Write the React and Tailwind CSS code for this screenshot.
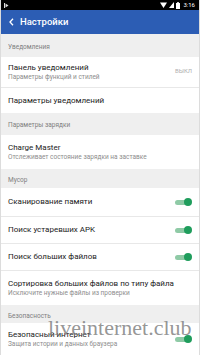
import React from "react";

function Toggle() {
  return (
    <div className="relative w-[17px] h-[8px] flex items-center">
      <div className="w-[15px] h-[5px] rounded-full bg-[#8fcaa6]" />
      <div className="absolute right-0 w-[8px] h-[8px] rounded-full bg-[#1f9d5c]" />
    </div>
  );
}

function Header({ title, h, pt }) {
  return (
    <div className={`bg-[#efefef] flex items-center px-[7px] ${h} ${pt}`}>
      <span className="text-[6.5px] text-[#808080]">{title}</span>
    </div>
  );
}

function Row({ title, sub, h, right, last }) {
  return (
    <div className={`flex items-center pl-[7px] pr-[7px] ${h} ${last ? "" : "border-b border-[#e8e8e8]"}`}>
      <div className="flex-1 flex flex-col justify-center">
        <div className="text-[8px] leading-[10px] text-[#222]">{title}</div>
        {sub && <div className="text-[6.5px] leading-[9px] text-[#8d8d8d]">{sub}</div>}
      </div>
      {right}
    </div>
  );
}

export default function App() {
  return (
    <div
      className="relative w-[200px] h-[355px] overflow-hidden bg-white border-x border-[#dcdcdc]"
      style={{ fontFamily: "Roboto, 'Noto Sans', sans-serif" }}
    >
      {/* status bar */}
      <div className="h-[10px] bg-black flex items-center justify-between pl-[3px] pr-[4px]">
        <svg width="5" height="5" viewBox="0 0 5 5">
          <rect x="0" y="0" width="1" height="5" fill="#ddd" />
          <path d="M1.5 0.5 L4.5 2.5 L1.5 4.5 Z" fill="#ddd" />
        </svg>
        <div className="flex items-center gap-[2px]">
          <svg width="7" height="6" viewBox="0 0 7 6">
            <path d="M0 0.5 L7 0.5 L3.5 6 Z" fill="#fff" />
          </svg>
          <svg width="5" height="6" viewBox="0 0 5 6">
            <path d="M5 0 L5 6 L0 6 Z" fill="#fff" />
          </svg>
          <svg width="4" height="7" viewBox="0 0 4 7">
            <rect x="1.2" y="0" width="1.6" height="1" fill="#fff" />
            <rect x="0" y="1" width="4" height="6" fill="#fff" />
          </svg>
          <span className="text-[6px] leading-[6px] text-white ml-[1px]">3:16</span>
        </div>
      </div>

      {/* app bar */}
      <div className="h-[24px] bg-[#2c5db4] flex items-center pl-[8px] gap-[6px]">
        <svg width="5" height="8" viewBox="0 0 5 8">
          <path d="M4 0.8 L1 4 L4 7.2" stroke="#fff" strokeWidth="1.3" fill="none" />
        </svg>
        <span className="text-[9.5px] font-medium text-white">Настройки</span>
      </div>

      <Header title="Уведомления" h="h-[23px]" pt="pt-[4px]" />
      <Row
        title="Панель уведомлений"
        sub="Параметры функций и стилей"
        h="h-[31px]"
        right={<span className="text-[6px] text-[#b0b0b0] self-start mt-[9px]">ВЫКЛ</span>}
      />
      <Row title="Параметры уведомлений" h="h-[25px]" last />

      <Header title="Параметры зарядки" h="h-[22px]" pt="pt-[4px]" />
      <Row
        title="Charge Master"
        sub="Отслеживает состояние зарядки на заставке"
        h="h-[34px]"
        last
      />

      <Header title="Мусор" h="h-[19px]" pt="pt-[5px]" />
      <Row title="Сканирование памяти" h="h-[29px]" right={<Toggle />} />
      <Row title="Поиск устаревших APK" h="h-[27px]" right={<Toggle />} />
      <Row title="Поиск больших файлов" h="h-[27px]" right={<Toggle />} />
      <Row
        title="Сортировка больших файлов по типу файла"
        sub="Исключите нужные файлы из проверки"
        h="h-[34px]"
        last
      />

      <Header title="Безопасность" h="h-[18px]" pt="pt-[5px]" />
      <Row
        title="Безопасный интернет"
        sub="Защита истории и данных браузера"
        h="h-[32px]"
        right={<Toggle />}
        last
      />

      {/* watermark */}
      <div
        className="absolute left-[47px] top-[317px] text-[22px] leading-[22px] text-[#7a7a7a]/80"
        style={{ fontFamily: "'Liberation Serif', serif" }}
      >
        liveinternet.club
      </div>
    </div>
  );
}
